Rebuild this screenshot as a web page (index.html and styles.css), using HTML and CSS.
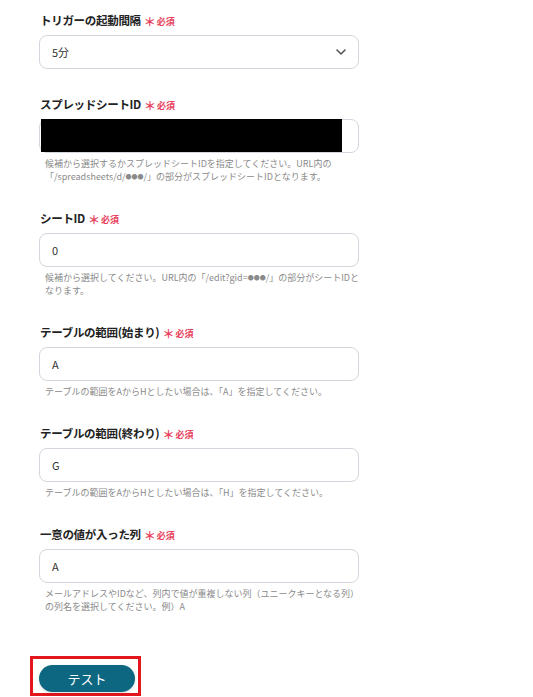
FILE: index.html
```html
<!DOCTYPE html>
<html lang="ja">
<head>
<meta charset="utf-8">
<link rel="stylesheet" href="styles.css">
</head>
<body>
<div class="form">
  <div class="field">
    <div class="label"><span>トリガーの起動間隔</span><span class="star">＊</span><span class="req">必須</span></div>
    <div class="box select">
      <span class="val">5分</span>
      <svg class="chev" width="10" height="6" viewBox="0 0 10 6"><path d="M1 1 L5 5 L9 1" fill="none" stroke="#555" stroke-width="1.6" stroke-linecap="round" stroke-linejoin="round"/></svg>
    </div>
  </div>
  <div class="field">
    <div class="label"><span>スプレッドシートID</span><span class="star">＊</span><span class="req">必須</span></div>
    <div class="box redacted"><div class="black"></div></div>
    <div class="help">候補から選択するかスプレッドシートIDを指定してください。URL内の<br>「/spreadsheets/d/<span class="dots">●●●</span>/」の部分がスプレッドシートIDとなります。</div>
  </div>
  <div class="field">
    <div class="label"><span>シートID</span><span class="star">＊</span><span class="req">必須</span></div>
    <div class="box"><span class="val">0</span></div>
    <div class="help">候補から選択してください。URL内の「/edit?gid=<span class="dots">●●●</span>/」の部分がシートIDと<br>なります。</div>
  </div>
  <div class="field">
    <div class="label"><span>テーブルの範囲(始まり)</span><span class="star">＊</span><span class="req">必須</span></div>
    <div class="box"><span class="val">A</span></div>
    <div class="help">テーブルの範囲をAからHとしたい場合は、「A」を指定してください。</div>
  </div>
  <div class="field">
    <div class="label"><span>テーブルの範囲(終わり)</span><span class="star">＊</span><span class="req">必須</span></div>
    <div class="box"><span class="val">G</span></div>
    <div class="help">テーブルの範囲をAからHとしたい場合は、「H」を指定してください。</div>
  </div>
  <div class="field">
    <div class="label"><span>一意の値が入った列</span><span class="star">＊</span><span class="req">必須</span></div>
    <div class="box"><span class="val">A</span></div>
    <div class="help">メールアドレスやIDなど、列内で値が重複しない列（ユニークキーとなる列）<br>の列名を選択してください。例）A</div>
  </div>
</div>
<div class="highlight">
  <div class="btn">テスト</div>
</div>
</body>
</html>
```
FILE: styles.css
```css
html, body {
  margin: 0;
  padding: 0;
  background: #ffffff;
  font-family: "Noto Sans CJK JP", "Noto Sans", sans-serif;
  color: #333;
}
.form {
  padding: 12px 0 0 39px;
  width: 320px;
  display: flex;
  flex-direction: column;
  gap: 27px;
}
.field {
  display: flex;
  flex-direction: column;
}
.label {
  display: flex;
  align-items: baseline;
  height: 16px;
  line-height: 16px;
  font-size: 11.5px;
  font-weight: 700;
  color: #222;
  letter-spacing: -0.3px;
  padding-left: 1px;
  white-space: nowrap;
}
.star {
  color: #e8425c;
  font-size: 12px;
  font-weight: 700;
  margin-left: 3px;
  letter-spacing: 0;
  position: relative;
  top: 2px;
}
.req {
  color: #e8425c;
  font-size: 9px;
  font-weight: 700;
  margin-left: 1px;
  letter-spacing: 0;
}
.box {
  margin-top: 7px;
  height: 34px;
  box-sizing: border-box;
  border: 1px solid #d3d6dc;
  border-radius: 8px;
  display: flex;
  align-items: center;
  padding: 0 12px 0 12px;
  position: relative;
}
.val {
  font-size: 11px;
  color: #333;
}
.select {
  justify-content: space-between;
}
.black {
  position: absolute;
  left: 1px;
  top: -1px;
  width: 301px;
  height: 33px;
  background: #000;
}
.help {
  margin-top: 4px;
  padding-left: 6px;
  font-size: 9px;
  line-height: 13px;
  color: #8a8a8a;
  white-space: nowrap;
}
.dots {
  font-size: 6px;
  line-height: 13px;
  vertical-align: 1px;
}
.highlight {
  margin: 43px 0 0 30px;
  width: 111px;
  box-sizing: border-box;
  border: 3px solid #e3161e;
  padding: 6px 3px 1px 6px;
}
.btn {
  width: 96px;
  height: 27px;
  border-radius: 14px;
  background: #0e6781;
  color: #fff;
  font-size: 13px;
  line-height: 27px;
  font-weight: 400;
  display: flex;
  align-items: center;
  justify-content: center;
  box-shadow: 0 1px 3px rgba(0,0,0,0.15);
}
```
